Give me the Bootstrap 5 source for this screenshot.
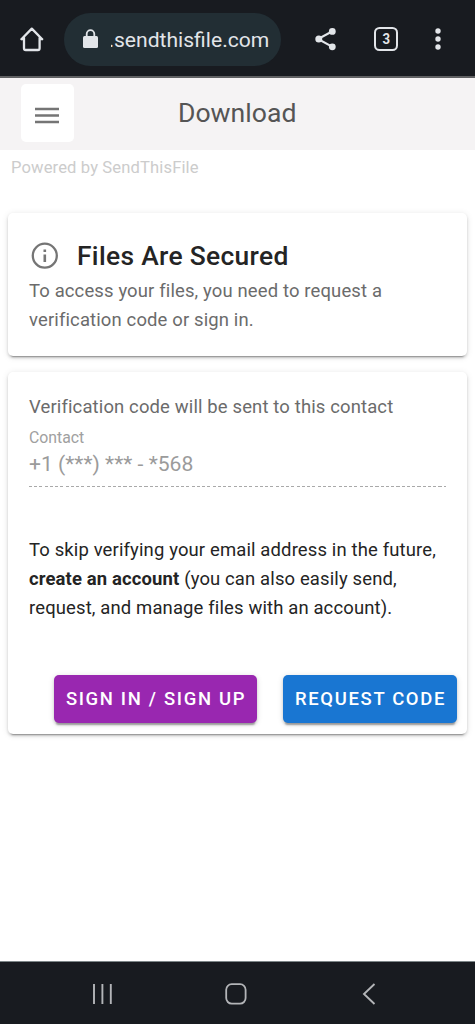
<!DOCTYPE html>
<html lang="en">
<head>
<meta charset="utf-8">
<meta name="viewport" content="width=device-width, initial-scale=1">
<title>Download</title>
<link href="https://cdn.jsdelivr.net/npm/bootstrap@5.3.0/dist/css/bootstrap.min.css" rel="stylesheet">
<style>
body{font-family:Roboto,"Liberation Sans",sans-serif;font-size:18.47px;line-height:29px;color:#242424;background:#fff;overflow:hidden}
svg{display:block;flex:none}
.screen{height:1024px}
.chrome-bar{height:78px;background:#181b20;border-bottom:2px solid #606163;color:#e2e5e9;padding:2px 0 0 19px}
.url-pill{width:217px;height:53px;margin-left:19px;background:#222e34;border-radius:27px;padding-left:18px;font-size:21.1px;white-space:nowrap}
.url-text{margin:1px 0 0 12px;text-indent:-2.6px;overflow:hidden}
.share-icon{margin-left:32px}
.more-icon{margin-left:37px}
.tab-count{width:24px;height:24px;border:2.3px solid #e2e5e9;border-radius:5.5px;font-size:15px;font-weight:700;line-height:1;margin-left:37px}
.tab-count span{transform:scaleX(.88)}
.app-header{height:72px;background:#f5f3f4;padding-left:21px}
.menu-btn{width:53px;height:58px;margin-top:-2px;background:#fff;border-radius:5px;border:0;padding:5px 1px 0 0}
.page-title{font-size:26.6px;color:#555;margin-left:104px;margin-top:-1px;line-height:1}
.powered{font-size:16.6px;line-height:20px;color:#ccc;padding:8px 0 0 11px;height:63px;letter-spacing:.12px}
.panel{margin:0 8px 16px;border:0;border-radius:5px;padding:0 21px;box-shadow:0 4px 1.5px -3px rgba(0,0,0,.3),0 2px 3px rgba(0,0,0,.16),0 1px 7px rgba(0,0,0,.1)}
.info-panel{height:143px;padding-top:26px}
.form-panel{height:362px;padding-top:21px}
.heading{font-size:26.4px;font-weight:500;line-height:34px;letter-spacing:.32px;margin:0 0 0 17px}
.copy{letter-spacing:.14px;white-space:nowrap;margin:0}
.info-panel .copy{margin-top:4px}
.muted{color:#6b6b6b}
.contact-label{font-size:15.8px;line-height:18px;color:#a0a0a0;margin-top:7px}
.contact-value{font-size:21.1px;line-height:26px;color:#9b9b9b;height:40px;padding-top:4px;margin-bottom:49px;background:repeating-linear-gradient(90deg,#a9a9a9 0 3px,transparent 3px 5.25px) 0 100%/100% 1.5px no-repeat}
.actions{margin:52px -11px 0 0;gap:26px}
.action-btn{height:48px;border:0;border-radius:5px;color:#fff;font-size:18.47px;font-weight:500;letter-spacing:1.67px;padding:2px 0 0 1px;white-space:nowrap;box-shadow:0 4px 1.5px -2.5px rgba(0,0,0,.25),0 2px 3px rgba(0,0,0,.16),0 1px 6px rgba(0,0,0,.12)}
.sign-btn{width:203px;background:#9927b0}
.code-btn{width:174px;background:#1976d2}
.nav-keys{height:63px;background:#181b20;border-top:1.5px solid #7d8688;padding:1px 99px 0 91px}
.back-icon{margin-left:2px}
.home-icon{margin-left:-2px}
</style>
</head>
<body>
<div class="screen d-flex flex-column">
  <div class="chrome-bar d-flex align-items-center">
    <svg width="26" height="26" viewBox="0 0 26 26" fill="none" stroke="#e2e5e9" stroke-width="2.3" stroke-linejoin="round" stroke-linecap="round"><path d="M2.4 13.2 12.8 2.6 23.2 13.2M5 11.5V22.3Q5 24 6.7 24H18.9Q20.6 24 20.6 22.3V11.5M2.4 13.2H5M23.2 13.2H20.6"/></svg>
    <div class="url-pill d-flex align-items-center">
      <svg width="17" height="20" viewBox="0 0 17 20"><rect x="1" y="7" width="15" height="12" rx="1.5" fill="#e2e5e9"/><path d="M4.7 8V5a3.8 3.8 0 0 1 7.600 0v3" fill="none" stroke="#e2e5e9" stroke-width="1.8"/></svg>
      <span class="url-text">.sendthisfile.com</span>
    </div>
    <svg class="share-icon" width="24" height="26" viewBox="0 0 24 26"><path d="M19 5.500 5 13l14 7.700" fill="none" stroke="#e2e5e9" stroke-width="2.1"/><g fill="#e2e5e9"><circle cx="19.3" cy="5.4" r="3.4"/><circle cx="5.8" cy="13.1" r="3.5"/><circle cx="19.3" cy="20.8" r="3.4"/></g></svg>
    <div class="tab-count d-flex align-items-center justify-content-center"><span>3</span></div>
    <svg class="more-icon" width="6" height="24" viewBox="0 0 6 24" fill="#e2e5e9"><circle cx="3" cy="4" r="2.7"/><circle cx="3" cy="12" r="2.7"/><circle cx="3" cy="20" r="2.7"/></svg>
  </div>

  <header class="app-header d-flex align-items-center">
    <button class="menu-btn d-flex align-items-center justify-content-center" aria-label="Menu">
      <svg width="24" height="17" viewBox="0 0 24 17"><path d="M0 2h24M0 8.500h24M0 15h24" stroke="#757575" stroke-width="2.4"/></svg>
    </button>
    <div class="page-title">Download</div>
  </header>

  <div class="powered">Powered by SendThisFile</div>

  <section class="card panel info-panel">
    <div class="d-flex align-items-center">
      <svg width="31" height="34" viewBox="0 0 31 34"><circle cx="15.8" cy="16.7" r="12" fill="none" stroke="#757575" stroke-width="2.3"/><path d="M15.800 15.500v7.500M15.800 10.500v2.600" stroke="#757575" stroke-width="2.6"/></svg>
      <h1 class="heading">Files Are Secured</h1>
    </div>
    <p class="copy muted">To access your files, you need to request a<br>verification code or sign in.</p>
  </section>

  <section class="card panel form-panel">
    <p class="copy muted">Verification code will be sent to this contact</p>
    <div class="contact-label">Contact</div>
    <div class="contact-value">+1 (***) *** - *568</div>
    <p class="copy">To skip verifying your email address in the future,<br><strong>create an account</strong> (you can also easily send,<br>request, and manage files with an account).</p>
    <div class="actions d-flex justify-content-end">
      <button class="btn action-btn sign-btn">SIGN IN / SIGN UP</button>
      <button class="btn action-btn code-btn">REQUEST CODE</button>
    </div>
  </section>

  <nav class="nav-keys d-flex align-items-center justify-content-between mt-auto">
    <svg width="22" height="22" viewBox="0 0 22 22"><path d="M3 1v20M11.400 1v20M19.800 1v20" stroke="#b3b5b8" stroke-width="1.9"/></svg>
    <svg class="home-icon" width="22" height="22" viewBox="0 0 22 22"><rect x="1.2" y="1.2" width="19.4" height="19.4" rx="5.5" fill="none" stroke="#b3b5b8" stroke-width="1.8"/></svg>
    <svg class="back-icon" width="14" height="22" viewBox="0 0 14 22"><path d="M12.500 1 2 11l10.500 10" fill="none" stroke="#b3b5b8" stroke-width="1.9"/></svg>
  </nav>
</div>
<script src="https://cdn.jsdelivr.net/npm/bootstrap@5.3.0/dist/js/bootstrap.bundle.min.js"></script>
</body>
</html>
